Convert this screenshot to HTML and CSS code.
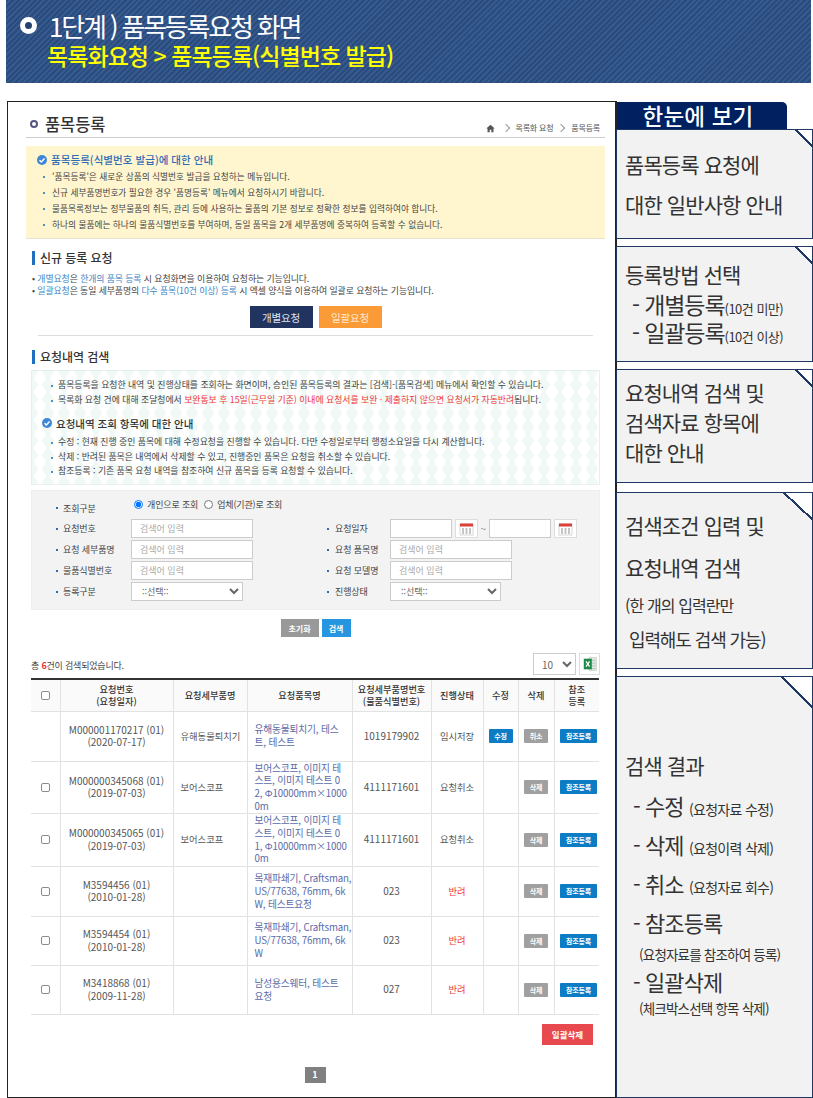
FILE: index.html
```html
<!DOCTYPE html>
<html lang="ko">
<head>
<meta charset="utf-8">
<title>품목등록요청 화면</title>
<link rel="stylesheet" href="styles.css">
</head>
<body>
<header class="banner">
  <div class="banner-title"><span class="ring"></span>1단계 ) 품목등록요청 화면</div>
  <div class="banner-sub">목록화요청 &gt; 품목등록(식별번호 발급)</div>
</header>
<div class="layout">
  <main class="frame">
    <div class="page-head">
      <h1 class="page-title"><span class="title-dot"></span>품목등록</h1>
      <div class="crumbs">
        <svg class="home" viewBox="0 0 10 10" width="9" height="9"><path d="M5 .8 .3 5h1.4v4.2h2.4V6.4h1.8v2.8h2.4V5h1.4z" fill="#555"/></svg>
        <span class="chev"></span><span>목록화 요청</span><span class="chev"></span><span>품목등록</span>
      </div>
    </div>
    <section class="notice">
      <h2 class="notice-title"><svg class="check" viewBox="0 0 12 12" width="10" height="10"><circle cx="6" cy="6" r="6" fill="#3f86d6"/><path d="M3 6.2 5.2 8.4 9 4.2" stroke="#fff" stroke-width="1.7" fill="none"/></svg>품목등록(식별번호 발급)에 대한 안내</h2>
      <ul class="dots">
        <li>'품목등록'은 새로운 상품의 식별번호 발급을 요청하는 메뉴입니다.</li>
        <li>신규 세부품명번호가 필요한 경우 '품명등록' 메뉴에서 요청하시기 바랍니다.</li>
        <li>물품목록정보는 정부물품의 취득, 관리 등에 사용하는 물품의 기본 정보로 정확한 정보를 입력하여야 합니다.</li>
        <li>하나의 물품에는 하나의 물품식별번호를 부여하며, 동일 품목을 2개 세부품명에 중복하여 등록할 수 없습니다.</li>
      </ul>
    </section>
    <h2 class="sec-head first">신규 등록 요청</h2>
    <div class="reg-info">
      <p>• <b>개별요청</b>은 <b>한개의 품목 등록</b> 시 요청화면을 이용하여 요청하는 기능입니다.</p>
      <p>• <b>일괄요청</b>은 동일 세부품명의 <b>다수 품목(10건 이상) 등록</b> 시 엑셀 양식을 이용하여 일괄로 요청하는 기능입니다.</p>
    </div>
    <div class="reg-btns">
      <button class="big navy">개별요청</button>
      <button class="big orange">일괄요청</button>
    </div>
    <hr class="rule">
    <h2 class="sec-head">요청내역 검색</h2>
    <section class="guide">
      <ul class="dots">
        <li>품목등록을 요청한 내역 및 진행상태를 조회하는 화면이며, 승인된 품목등록의 결과는 [검색]-[품목검색] 메뉴에서 확인할 수 있습니다.</li>
        <li>목록화 요청 건에 대해 조달청에서 <em>보완통보 후 15일(근무일 기준) 이내에 요청서를 보완 · 제출하지 않으면 요청서가 자동반려</em>됩니다.</li>
      </ul>
      <h3 class="guide-title"><svg class="check" viewBox="0 0 12 12" width="10" height="10"><circle cx="6" cy="6" r="6" fill="#3f86d6"/><path d="M3 6.2 5.2 8.4 9 4.2" stroke="#fff" stroke-width="1.7" fill="none"/></svg>요청내역 조회 항목에 대한 안내</h3>
      <ul class="dots">
        <li>수정 : 현재 진행 중인 품목에 대해 수정요청을 진행할 수 있습니다. 다만 수정일로부터 행정소요일을 다시 계산합니다.</li>
        <li>삭제 : 반려된 품목은 내역에서 삭제할 수 있고, 진행중인 품목은 요청을 취소할 수 있습니다.</li>
        <li>참조등록 : 기존 품목 요청 내역을 참조하여 신규 품목을 등록 요청할 수 있습니다.</li>
      </ul>
    </section>
    <form class="search">
      <div class="s-row radio-row">
        <label class="s-label">조회구분</label>
        <div class="radios">
          <input type="radio" name="k" checked><span>개인으로 조회</span>
          <input type="radio" name="k"><span>업체(기관)로 조회</span>
        </div>
      </div>
      <div class="s-row">
        <label class="s-label">요청번호</label><input class="s-input" placeholder="검색어 입력">
        <label class="s-label right">요청일자</label>
        <div class="dates">
          <input class="s-date">
          <span class="cal"><svg viewBox="0 0 16 14" width="16" height="14"><rect x="1" y="2" width="13" height="11" fill="#fff" stroke="#bbb" stroke-width=".6"/><rect x="1" y="1.5" width="13" height="3" fill="#d9423a"/><path d="M3 7h2M6.500 7h2M10 7h2M3 9h2M6.500 9h2M10 9h2M3 11h2M6.500 11h2M10 11h2" stroke="#8a8a8a" stroke-width="1"/></svg></span>
          <span class="tilde">~</span>
          <input class="s-date">
          <span class="cal"><svg viewBox="0 0 16 14" width="16" height="14"><rect x="1" y="2" width="13" height="11" fill="#fff" stroke="#bbb" stroke-width=".6"/><rect x="1" y="1.500" width="13" height="3" fill="#d9423a"/><path d="M3 7h2M6.500 7h2M10 7h2M3 9h2M6.500 9h2M10 9h2M3 11h2M6.500 11h2M10 11h2" stroke="#8a8a8a" stroke-width="1"/></svg></span>
        </div>
      </div>
      <div class="s-row">
        <label class="s-label">요청 세부품명</label><input class="s-input" placeholder="검색어 입력">
        <label class="s-label right">요청 품목명</label><input class="s-input" placeholder="검색어 입력">
      </div>
      <div class="s-row">
        <label class="s-label">물품식별번호</label><input class="s-input" placeholder="검색어 입력">
        <label class="s-label right">요청 모델명</label><input class="s-input" placeholder="검색어 입력">
      </div>
      <div class="s-row">
        <label class="s-label">등록구분</label><select class="s-select"><option>::선택::</option></select>
        <label class="s-label right">진행상태</label><select class="s-select"><option>::선택::</option></select>
      </div>
    </form>
    <div class="search-btns">
      <button class="small grey">초기화</button>
      <button class="small sky">검색</button>
    </div>
    <div class="result-bar">
      <span class="count">총 <strong>6</strong>건이 검색되었습니다.</span>
      <select class="per-page"><option>10</option></select>
      <span class="excel"><svg viewBox="0 0 18 18" width="16" height="16"><rect x="8" y="2" width="8" height="14" fill="#e4e9e4" stroke="#b5c4b5" stroke-width=".7"/><path d="M10 5h5M10 8h5M10 11h5M10 14h5" stroke="#a9c5a9" stroke-width="1"/><rect x="2" y="3" width="9" height="12" fill="#1f8a45"/><path d="M4.500 6 8.500 12M8.500 6 4.500 12" stroke="#fff" stroke-width="1.400"/></svg></span>
    </div>
    <table class="grid">
      <colgroup><col class="c1"><col class="c2"><col class="c3"><col class="c4"><col class="c5"><col class="c6"><col class="c7"><col class="c8"><col class="c9"></colgroup>
      <thead>
        <tr><th><input type="checkbox"></th><th>요청번호<br>(요청일자)</th><th>요청세부품명</th><th>요청품목명</th><th>요청세부품명번호<br>(물품식별번호)</th><th>진행상태</th><th>수정</th><th>삭제</th><th>참조<br>등록</th></tr>
      </thead>
      <tbody>
        <tr class="r1"><td></td><td>M000001170217 (01)<br>(2020-07-17)</td><td>유해동물퇴치기</td><td class="item">유해동물퇴치기, 테스<br>트, 테스트</td><td>1019179902</td><td>임시저장</td><td><button class="tag blue">수정</button></td><td><button class="tag grey">취소</button></td><td><button class="tag blue wide">참조등록</button></td></tr>
        <tr class="r2"><td><input type="checkbox"></td><td>M000000345068 (01)<br>(2019-07-03)</td><td>보어스코프</td><td class="item">보어스코프, 이미지 테<br>스트, 이미지 테스트 0<br>2, Φ10000mm×1000<br>0m</td><td>4111171601</td><td>요청취소</td><td></td><td><button class="tag grey">삭제</button></td><td><button class="tag blue wide">참조등록</button></td></tr>
        <tr class="r3"><td><input type="checkbox"></td><td>M000000345065 (01)<br>(2019-07-03)</td><td>보어스코프</td><td class="item">보어스코프, 이미지 테<br>스트, 이미지 테스트 0<br>1, Φ10000mm×1000<br>0m</td><td>4111171601</td><td>요청취소</td><td></td><td><button class="tag grey">삭제</button></td><td><button class="tag blue wide">참조등록</button></td></tr>
        <tr class="r4"><td><input type="checkbox"></td><td>M3594456 (01)<br>(2010-01-28)</td><td></td><td class="item">목재파쇄기, Craftsman,<br>US/77638, 76mm, 6k<br>W, 테스트요청</td><td>023</td><td class="red">반려</td><td></td><td><button class="tag grey">삭제</button></td><td><button class="tag blue wide">참조등록</button></td></tr>
        <tr class="r5"><td><input type="checkbox"></td><td>M3594454 (01)<br>(2010-01-28)</td><td></td><td class="item">목재파쇄기, Craftsman,<br>US/77638, 76mm, 6k<br>W</td><td>023</td><td class="red">반려</td><td></td><td><button class="tag grey">삭제</button></td><td><button class="tag blue wide">참조등록</button></td></tr>
        <tr class="r6"><td><input type="checkbox"></td><td>M3418868 (01)<br>(2009-11-28)</td><td></td><td class="item">남성용스웨터, 테스트<br>요청</td><td>027</td><td class="red">반려</td><td></td><td><button class="tag grey">삭제</button></td><td><button class="tag blue wide">참조등록</button></td></tr>
      </tbody>
    </table>
    <div class="bulk"><button class="bulk-del">일괄삭제</button></div>
    <div class="pager"><span class="page-no">1</span></div>
  </main>
  <aside class="side">
    <div class="side-tab">한눈에 보기</div>
    <div class="panel p1">
      <p class="l38">품목등록 요청에</p>
      <p class="l38 gap">대한 일반사항 안내</p>
    </div>
    <div class="panel p2">
      <p class="big-l">등록방법 선택</p>
      <p class="ind">- 개별등록<small>(10건 미만)</small></p>
      <p class="ind">- 일괄등록<small>(10건 이상)</small></p>
    </div>
    <div class="panel p3">
      <p>요청내역 검색 및</p>
      <p>검색자료 항목에</p>
      <p>대한 안내</p>
    </div>
    <div class="panel p4">
      <p>검색조건 입력 및</p>
      <p>요청내역 검색</p>
      <p class="sub">(한 개의 입력란만</p>
      <p class="sub sub2">&nbsp;입력해도 검색 가능)</p>
    </div>
    <div class="panel p5">
      <p class="res-h">검색 결과</p>
      <p class="res">- 수정 <small>(요청자료 수정)</small></p>
      <p class="res">- 삭제 <small>(요청이력 삭제)</small></p>
      <p class="res">- 취소 <small>(요청자료 회수)</small></p>
      <p class="res">- 참조등록</p>
      <p class="res-note">(요청자료를 참조하여 등록)</p>
      <p class="res tight">- 일괄삭제</p>
      <p class="res-note last">(체크박스선택 항목 삭제)</p>
    </div>
  </aside>
</div>
</body>
</html>
```

FILE: styles.css
```css
* { box-sizing: border-box; }
html, body { margin: 0; padding: 0; }
body {
  width: 813px;
  height: 1098px;
  overflow: hidden;
  background: #fff;
  font-family: "Noto Sans CJK KR", "Noto Sans", sans-serif;
  color: #333;
}
p, h1, h2, h3, ul { margin: 0; padding: 0; font-weight: normal; }
ul { list-style: none; }
button { font-family: inherit; border: 0; padding: 0; }

/* banner */
.banner {
  margin: 0 2px 0 6px;
  height: 83px;
  padding: 6px 0 0 14px;
  background: repeating-linear-gradient(135deg, #2a4b7d 0 2px, #375a8e 2px 4px);
}
.banner-title {
  display: flex;
  align-items: center;
  height: 38px;
  color: #fff;
  font-size: 26px;
  letter-spacing: -2.2px;
  white-space: pre;
}
.ring {
  width: 17px;
  height: 17px;
  margin-right: 12px;
  border: 5px solid #fff;
  border-radius: 50%;
  background: #24426f;
}
.banner-sub {
  margin: -3px 0 0 27px;
  color: #ffff00;
  font-size: 23px;
  font-weight: 500;
  line-height: 28px;
  letter-spacing: -.95px;
}

/* layout */
.layout {
  display: flex;
  margin: 18px 0 0 7px;
  height: 997px;
}
.frame {
  width: 610px;
  height: 997px;
  border: 1px solid #222;
  border-right-width: 2px;
  padding: 0 10px 0 18px;
}

/* page head */
.page-head {
  display: flex;
  justify-content: space-between;
  align-items: flex-end;
  height: 36px;
  border-bottom: 1px solid #ccc;
}
.page-title {
  display: flex;
  align-items: center;
  font-size: 16.500px;
  line-height: 20px;
  margin: 0 0 3px 4px;
  color: #333;
  font-weight: 500;
  letter-spacing: -.1px;
}
.title-dot {
  width: 8px;
  height: 8px;
  margin-right: 7px;
  border: 2px solid #55557f;
  border-radius: 50%;
}
.crumbs {
  display: flex;
  align-items: center;
  gap: 5px;
  margin: 0 5px 3px 0;
  font-size: 8px;
  line-height: 12px;
  letter-spacing: -.2px;
  color: #555;
}
.home { margin-right: 3px; }
.chev {
  width: 6px;
  height: 6px;
  margin-right: 2px;
  border-top: 1px solid #999;
  border-right: 1px solid #999;
  transform: rotate(45deg);
}

/* notice */
.notice {
  height: 93px;
  margin-top: 8px;
  padding: 6px 0 0 11px;
  background: #fff6cf;
  border-bottom: 1px solid #e6e2cc;
}
.notice-title {
  display: flex;
  align-items: center;
  font-size: 10.500px;
  line-height: 16px;
  font-weight: 500;
  color: #2f6cb5;
  letter-spacing: .05px;
}
.check { margin-right: 4px; flex: none; }
.dots li {
  position: relative;
  padding-left: 15px;
  font-size: 8.700px;
  line-height: 16px;
  letter-spacing: 0;
  color: #444;
  white-space: nowrap;
}
.dots li::before {
  content: "";
  position: absolute;
  left: 6px;
  top: 7px;
  width: 2px;
  height: 2px;
  background: #4a90c9;
}
.notice .dots { margin-top: 1px; }

/* sections */
.sec-head {
  margin: 0 0 0 6px;
  height: 14px;
  padding-left: 5px;
  border-left: 3px solid #1f6fc0;
  font-size: 12px;
  line-height: 14px;
  font-weight: 500;
  color: #333;
  letter-spacing: -.05px;
}
.sec-head.first { margin-top: 12px; }
.reg-info { margin: 8px 0 0 6px; }
.reg-info p {
  font-size: 8.900px;
  line-height: 12px;
  letter-spacing: -.09px;
  color: #444;
  white-space: nowrap;
}
.reg-info b { font-weight: normal; color: #3d85c6; }
.reg-btns {
  display: flex;
  justify-content: center;
  gap: 6px;
  margin-top: 9px;
}
.big {
  width: 63px;
  height: 22px;
  font-size: 10.500px;
  color: #fff;
  letter-spacing: -.2px;
}
.navy { background: #21335f; color: #dfe4ef; }
.orange { background: #fb9b37; color: #ffe9cf; }
.rule {
  margin: 7px 12px 0 12px;
  border: 0;
  border-top: 1px solid #ddd;
  height: 0;
}
.rule + .sec-head { margin-top: 14px; }

/* guide */
.guide {
  height: 115px;
  margin: 6px 5px 0 5px;
  padding: 7px 0 0 3px;
  border: 1px solid #e7eeec;
  background-color: #fff;
  background-image:
    linear-gradient(60deg, #f1f9f6 25%, transparent 25%, transparent 75%, #f1f9f6 75%),
    linear-gradient(120deg, #f1f9f6 25%, transparent 25%, transparent 75%, #f1f9f6 75%);
  background-size: 16px 14px;
}
.guide .dots { padding-left: 10px; }
.guide .dots li {
  padding-left: 13px;
  line-height: 14.500px;
  font-size: 8.900px;
  letter-spacing: -.03px;
}
.guide em { font-style: normal; color: #f03a3a; }
.guide-title {
  display: flex;
  align-items: center;
  margin: 8px 0 4px 7px;
  height: 16px;
  font-size: 10.500px;
  font-weight: 500;
  color: #333;
  letter-spacing: 0;
}

/* search form */
.search {
  height: 120px;
  margin: 5px 5px 0 5px;
  padding: 7px 0 0 24px;
  background: #f3f3f3;
  border: 1px solid #eee;
}
.s-row {
  display: flex;
  align-items: center;
  height: 19px;
  margin-bottom: 2px;
}
.radio-row { height: 21px; margin-bottom: 0; align-items: flex-start; }
.s-label {
  position: relative;
  width: 75px;
  padding-left: 7px;
  font-size: 9px;
  line-height: 19px;
  letter-spacing: -.1px;
  color: #444;
}
.radio-row .s-label { line-height: 21px; }
.s-label::before {
  content: "";
  position: absolute;
  left: 0;
  top: 9px;
  width: 2px;
  height: 2px;
  background: #2f6cb5;
}
.s-label.right { width: 63px; margin-left: 74px; padding-left: 8px; }
.s-select + .s-label.right { margin-left: 84px; }
.s-input {
  width: 122px;
  height: 19px;
  padding: 0 8px;
  border: 1px solid #ccc;
  background: #fff;
  font-family: inherit;
  font-size: 9px;
}
.s-input::placeholder { color: #aaa; letter-spacing: 0; }
.s-select {
  width: 112px;
  height: 19px;
  padding-left: 6px;
  border: 1px solid #ccc;
  border-radius: 0;
  background-color: #fff;
  font-family: inherit;
  font-size: 9px;
  color: #666;
}
.s-label.right + .s-select { width: 111px; }
.radios {
  display: flex;
  align-items: center;
  height: 16px;
  margin-top: -2px;
  font-size: 9px;
  letter-spacing: -.15px;
  color: #444;
}
.radios input { width: 9px; height: 9px; margin: 0 4px 0 3px; }
.radios span + input { margin-left: 6px; }
.dates { display: flex; align-items: center; }
.s-date {
  width: 62px;
  height: 19px;
  padding: 0;
  border: 1px solid #ccc;
  background: #fff;
}
.cal {
  display: flex;
  align-items: center;
  justify-content: center;
  width: 23px;
  height: 19px;
  margin-left: 3px;
  border: 1px solid #ddd;
  background: #fff;
}
.tilde { width: 11px; font-size: 9px; text-align: center; color: #555; }

/* search buttons */
.search-btns {
  display: flex;
  justify-content: center;
  gap: 3px;
  margin-top: 9px;
}
.small {
  height: 18px;
  font-size: 8px;
  font-weight: 700;
  color: #fff;
}
.small.grey { width: 38px; background: #999; }
.small.sky { width: 29px; background: #2796e0; }

/* results */
.result-bar {
  display: flex;
  align-items: center;
  height: 22px;
  margin: 16px 5px 0 5px;
}
.count {
  flex: 1;
  font-size: 9px;
  letter-spacing: -.2px;
  color: #444;
  padding-top: 2px;
}
.count strong { color: #e33; font-weight: 700; }
.per-page {
  width: 43px;
  height: 22px;
  padding-left: 4px;
  border: 1px solid #ccc;
  border-radius: 0;
  background: #fff;
  font-family: inherit;
  font-size: 10px;
  color: #666;
}
.excel {
  display: flex;
  align-items: center;
  justify-content: center;
  width: 21px;
  height: 22px;
  margin-left: 3px;
  border: 1px solid #ddd;
  background: #fff;
}

.grid {
  width: 568px;
  margin: 3px 5px 0 5px;
  table-layout: fixed;
  border-collapse: collapse;
  border-top: 2px solid #333;
  font-size: 10px;
  line-height: 12.500px;
  color: #555;
  text-align: center;
}
.c1 { width: 29px; }
.c2 { width: 113px; }
.c3 { width: 74px; }
.c4 { width: 105px; }
.c5 { width: 79px; }
.c6 { width: 52px; }
.c7 { width: 35px; }
.c8 { width: 36px; }
.c9 { width: 45px; }
.grid th, .grid td {
  padding: 0;
  border-right: 1px solid #e2e2e2;
  border-bottom: 1px solid #e2e2e2;
  vertical-align: middle;
}
.grid th:last-child, .grid td:last-child { border-right: 0; }
.grid th {
  height: 32px;
  font-weight: 500;
  font-size: 9.200px;
  line-height: 12px;
  color: #333;
  background: #fafafa;
}
.grid td:nth-child(3) {
  padding-left: 7px;
  font-size: 9.300px;
  text-align: left;
  white-space: nowrap;
}
.grid td:nth-child(6) { font-size: 9.300px; }
.grid input {
  display: block;
  appearance: none;
  width: 9px;
  height: 9px;
  margin: 0 auto;
  border: 1px solid #8c8c8c;
  border-radius: 2px;
  background: #fff;
}
.r1 td { height: 50px; }
.r2 td { height: 52px; }
.r3 td { height: 53px; }
.r4 td { height: 50px; }
.r5 td { height: 49px; }
.r6 td { height: 49px; }
.grid .item {
  padding-left: 7px;
  font-size: 9.700px;
  text-align: left;
  color: #5a6ba8;
  white-space: nowrap;
  letter-spacing: -.15px;
  line-height: 13px;
}
.r2 .item, .r3 .item { line-height: 12.800px; }
.red { color: #f03a3a; }
.tag {
  display: block;
  margin: 0 auto;
  height: 14px;
  width: 24px;
  border-radius: 1px;
  font-size: 7px;
  font-weight: 700;
  line-height: 14px;
  color: #fff;
  letter-spacing: -.2px;
}
.tag.blue { background: #0c7cc4; }
.tag.grey { background: #a0a0a0; }
.tag.wide { width: 37px; margin: 0 2px 0 auto; }

.bulk {
  display: flex;
  justify-content: flex-end;
  margin: 9px 12px 0 0;
}
.bulk-del {
  width: 51px;
  height: 21px;
  background: #e7494f;
  color: #fff;
  font-size: 8.500px;
  font-weight: 700;
}
.pager {
  display: flex;
  justify-content: center;
  margin: 22px 0 0 -1px;
}
.page-no {
  width: 21px;
  height: 16px;
  background: #808080;
  color: #fff;
  font-size: 9px;
  font-weight: 700;
  line-height: 16px;
  text-align: center;
}

/* side */
.side {
  width: 196px;
  display: flex;
  flex-direction: column;
  font-size: 21px;
  letter-spacing: -.9px;
  color: #333;
}
.side-tab {
  width: 170px;
  height: 28px;
  margin-top: 1px;
  padding-right: 8px;
  background: #002060;
  border-radius: 0 5px 0 0;
  color: #fff;
  font-size: 22.500px;
  font-weight: 500;
  letter-spacing: .2px;
  line-height: 27px;
  text-align: center;
}
.panel {
  position: relative;
  margin-left: -1px;
  border: 1px solid #1f3864;
  border-top-width: 1.500px;
  background: #f2f2f2;
  padding-left: 8px;
  overflow: hidden;
}
.panel small { line-height: 1; }
.panel::after {
  content: "";
  position: absolute;
  top: -1px;
  right: -1px;
  width: 18px;
  height: 18px;
  background: linear-gradient(to top right, transparent calc(50% - 1px), #1f3864 calc(50% - 1px), #1f3864 calc(50% + 1px), #fff calc(50% + 1px));
}
.p1 { height: 110px; margin-top: -1px; padding-top: 15px; }
.p1 p { line-height: 38px; }
.p1 .gap { margin-top: 2px; }
.p2 { height: 116px; margin-top: 7px; padding-top: 11px; }
.big-l { line-height: 32px; }
.ind { line-height: 28px; padding-left: 7px; font-size: 23px; letter-spacing: -1.1px; }
.ind small { font-size: 13px; letter-spacing: -.5px; }
.p3 { height: 114px; margin-top: 7px; padding-top: 7px; }
.p3 p { line-height: 30px; }
.p4 { height: 177px; margin-top: 9px; padding-top: 11px; }
.p4::after { width: 30px; height: 28px; }
.p4 p { line-height: 42px; }
.p4 .sub { font-size: 16px; line-height: 34px; }
.p4 .sub2 { font-size: 18px; letter-spacing: -1.1px; }
.p5 { height: 422px; margin-top: 7px; padding-top: 70px; }
.p5::after { width: 32px; height: 32px; }
.res-h { line-height: 36px; margin-bottom: 3px; }
.res { padding-left: 8px; line-height: 39px; font-size: 22px; }
.res small { font-size: 14px; letter-spacing: -.7px; }
.res-note {
  margin-top: 2px;
  padding-left: 14px;
  font-size: 13.500px;
  line-height: 20px;
  letter-spacing: -.8px;
}
.res-note.last { margin-top: 0; }
.res.tight { line-height: 34px; }
```
